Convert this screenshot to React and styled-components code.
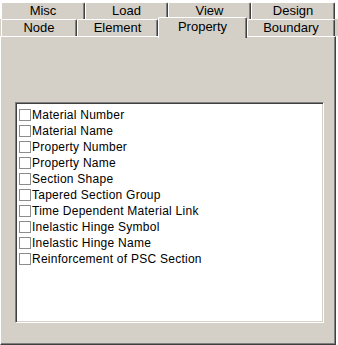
import React from "react";
import styled, { createGlobalStyle, css } from "styled-components";

const Global = createGlobalStyle`
  html, body { margin: 0; padding: 0; background: #ffffff; }
  #root { width: 338px; height: 345px; }
`;

const Root = styled.div`
  width: 338px;
  height: 345px;
  background: #ffffff;
  display: flex;
  flex-direction: column;
  font-family: "Liberation Sans", Arial, sans-serif;
  font-size: 12px;
  color: #000;
  overflow: hidden;
`;

const TabRow = styled.div`
  display: flex;
  height: 17px;
  padding-left: 1px;
  margin-top: ${(p) => (p.$first ? "2px" : "0")};
  background: ${(p) => (p.$first ? "#ffffff" : "#d4d0c8")};
  position: relative;
`;

const Tab = styled.div`
  box-sizing: border-box;
  width: ${(p) => p.$w}px;
  height: 17px;
  background: #d4d0c8;
  border-top: 1px solid #ffffff;
  border-left: 1px solid #ffffff;
  border-right: 1px solid #404040;
  border-top-left-radius: 2px;
  border-top-right-radius: 2px;
  box-shadow: inset -1px 0 0 #808080;
  display: flex;
  align-items: center;
  justify-content: center;
  padding-bottom: 1px;
  font-size: 13px;
  white-space: nowrap;
  ${(p) =>
    p.$selected &&
    css`
      position: relative;
      z-index: 1;
      height: 21px;
      margin-top: -2px;
      margin-bottom: -2px;
      padding-bottom: 4px;
    `}
`;

const Panel = styled.div`
  box-sizing: border-box;
  width: 336px;
  flex: 1;
  background: #d4d0c8;
  border-top: 1px solid #ffffff;
  border-left: 1px solid #ffffff;
  border-right: 1px solid #404040;
  border-bottom: 1px solid #404040;
  box-shadow: inset -1px -1px 0 #808080;
  padding: 65px 0 0 14px;
`;

const ListBox = styled.div`
  box-sizing: border-box;
  width: 309px;
  height: 221px;
  background: #ffffff;
  border-top: 1px solid #808080;
  border-left: 1px solid #808080;
  border-right: 1px solid #ffffff;
  border-bottom: 1px solid #ffffff;
  box-shadow: inset 1px 1px 0 #404040, inset -1px -1px 0 #d4d0c8;
  padding: 4px 0 0 3px;
  display: flex;
  flex-direction: column;
`;

const Item = styled.label`
  display: flex;
  align-items: center;
  height: 16px;
  white-space: nowrap;
  letter-spacing: 0.25px;
`;

const Box = styled.span`
  box-sizing: border-box;
  width: 12px;
  height: 12px;
  border: 1px solid #8c8c8c;
  background: #ffffff;
  margin-right: 1px;
  flex: none;
`;

const row1 = [
  ["Misc", 84],
  ["Load", 83],
  ["View", 83],
  ["Design", 84],
];
const row2 = [
  ["Node", 76],
  ["Element", 81],
  ["Property", 89, true],
  ["Boundary", 88],
];

const items = [
  "Material Number",
  "Material Name",
  "Property Number",
  "Property Name",
  "Section Shape",
  "Tapered Section Group",
  "Time Dependent Material Link",
  "Inelastic Hinge Symbol",
  "Inelastic Hinge Name",
  "Reinforcement of PSC Section",
];

export default function App() {
  return (
    <Root>
      <Global />
      <TabRow $first>
        {row1.map(([t, w]) => (
          <Tab key={t} $w={w}>
            {t}
          </Tab>
        ))}
      </TabRow>
      <TabRow>
        {row2.map(([t, w, s]) => (
          <Tab key={t} $w={w} $selected={s}>
            {t}
          </Tab>
        ))}
      </TabRow>
      <Panel>
        <ListBox>
          {items.map((t) => (
            <Item key={t}>
              <Box />
              {t}
            </Item>
          ))}
        </ListBox>
      </Panel>
    </Root>
  );
}
